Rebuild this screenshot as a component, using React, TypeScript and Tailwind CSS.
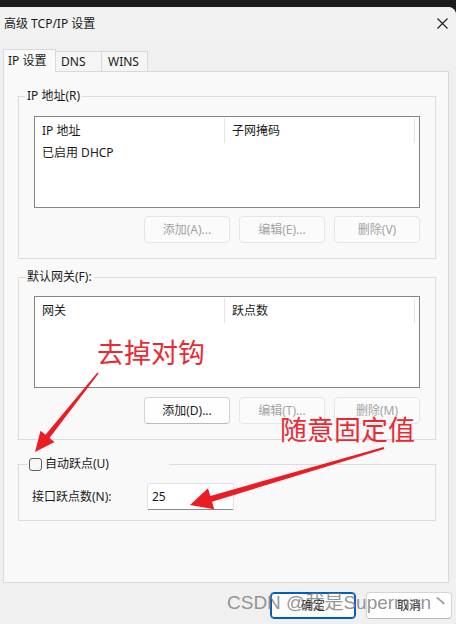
import React from "react";

const F = "font-['Noto_Sans','Noto_Sans_CJK_SC',sans-serif]";

function Btn({ label, disabled, primary }: { label: string; disabled?: boolean; primary?: boolean }) {
  const base = "w-[86px] h-[27px] rounded-[4px] border flex items-center justify-center text-[12px] leading-none";
  if (primary)
    return <div className={`${base} border-[#005fb8] bg-[#fdfdfd] text-[#1b1b1b] shadow-[inset_0_0_0_1px_#005fb8]`}>{label}</div>;
  if (disabled)
    return <div className={`${base} border-[#e6e6e6] bg-[#fbfbfb] text-[#a3a3a3]`}>{label}</div>;
  return <div className={`${base} border-[#d4d4d4] border-b-[#bababa] bg-[#fefefe] text-[#1b1b1b]`}>{label}</div>;
}

function ListBox({ c1, c2, rows }: { c1: string; c2: string; rows: string[] }) {
  return (
    <div className="h-[92px] border border-[#858585] bg-white flex flex-col">
      <div className="flex h-[26px] pt-[1px]">
        <div className="w-[190px] h-[25px] border-r border-[#e5e5e5] pl-[7px] flex items-center text-[12px] text-[#1b1b1b]">{c1}</div>
        <div className="w-[190px] h-[25px] border-r border-[#e5e5e5] pl-[7px] flex items-center text-[12px] text-[#1b1b1b]">{c2}</div>
      </div>
      {rows.map((r) => (
        <div key={r} className="h-[20px] pl-[7px] flex items-center text-[12px] text-[#1b1b1b]">{r}</div>
      ))}
    </div>
  );
}

export default function App() {
  return (
    <div className={`${F} relative w-[456px] h-[624px] overflow-hidden bg-[#1c1c1c]`}>
      <div className="h-[7px]" />
      <div className="h-[617px] bg-[#f0f0f0] rounded-tr-[8px] flex flex-col">
        {/* title bar */}
        <div className="h-[33px] flex items-center justify-between pl-[4px] pr-[8px] bg-[#f2f2f2] rounded-tr-[8px]">
          <span className="text-[12px] leading-none text-[#1b1b1b]">高级 TCP/IP 设置</span>
          <svg width="11" height="11" viewBox="0 0 11 11">
            <path d="M0.5 0.5 L10.5 10.5 M10.5 0.5 L0.5 10.5" stroke="#1b1b1b" strokeWidth="1.1" fill="none" />
          </svg>
        </div>
        {/* tabs */}
        <div className="mt-[9px] pl-[3px] flex items-end h-[23px] relative z-10 -mb-[1px]">
          <div className="w-[53px] h-[23px] border-t border-l border-r border-[#d9d9d9] bg-[#f9f9f9] pl-[4px] flex items-center text-[12px] text-[#1b1b1b]">IP 设置</div>
          <div className="w-[46px] h-[21px] border-t border-r border-b border-[#d9d9d9] bg-[#f5f5f5] pl-[5px] flex items-center text-[12px] text-[#1b1b1b]">DNS</div>
          <div className="w-[46px] h-[21px] border-t border-r border-b border-[#d9d9d9] bg-[#f5f5f5] pl-[6px] flex items-center text-[12px] text-[#1b1b1b]">WINS</div>
        </div>
        {/* panel */}
        <div className="mx-[3px] w-[446px] h-[512px] border border-[#d9d9d9] bg-[#f9f9f9] pt-[16px] pl-[14px] flex flex-col text-[12px] text-[#1b1b1b]">
          <fieldset className="w-[418px] border border-[#dcdcdc]">
            <legend className="ml-[6px] px-[2px] leading-[16px] text-[12px]">IP 地址(R)</legend>
            <div className="px-[15px] pt-[12px] pb-[15px]">
              <ListBox c1="IP 地址" c2="子网掩码" rows={["已启用 DHCP"]} />
              <div className="mt-[8px] flex justify-end gap-[9px]">
                <Btn label="添加(A)..." disabled />
                <Btn label="编辑(E)..." disabled />
                <Btn label="删除(V)" disabled />
              </div>
            </div>
          </fieldset>

          <fieldset className="mt-[10px] w-[418px] border border-[#dcdcdc]">
            <legend className="ml-[6px] px-[2px] leading-[16px] text-[12px]">默认网关(F):</legend>
            <div className="px-[15px] pt-[11px] pb-[15px]">
              <ListBox c1="网关" c2="跃点数" rows={[]} />
              <div className="mt-[9px] flex justify-end gap-[9px]">
                <Btn label="添加(D)..." />
                <Btn label="编辑(T)..." disabled />
                <Btn label="删除(M)" disabled />
              </div>
            </div>
          </fieldset>

          <fieldset className="mt-[16px] w-[418px] border border-[#dcdcdc]">
            <legend className="ml-[8px] pl-[2px] w-[142px] h-[16px] flex items-center gap-[3px] leading-[16px] text-[12px]">
              <span className="w-[13px] h-[13px] border border-[#5f5f5f] rounded-[3px] bg-[#f6f6f6] inline-block" />
              <span>自动跃点(U)</span>
            </legend>
            <div className="pl-[13px] pt-[11px] pb-[10px] flex items-center">
              <span className="w-[115px]">接口跃点数(N):</span>
              <div className="w-[87px] h-[27px] bg-white border border-[#e3e3e3] border-b-[#8a8a8a] rounded-[2px] pl-[4px] flex items-center text-[12px]">25</div>
            </div>
          </fieldset>
        </div>
        {/* bottom buttons */}
        <div className="mt-[9px] flex justify-end gap-[10px] pr-[4px]">
          <Btn label="确定" primary />
          <Btn label="取消" />
        </div>
      </div>

      {/* annotations */}
      <svg className="absolute left-0 top-0 pointer-events-none" width="456" height="624" viewBox="0 0 456 624">
        <polygon
          points="98.6,373.5 49.5,438 54.5,442 35,452 40.5,430.8 45.5,434.8 97.4,372.5"
          fill="#ec1c24"
        />
        <polygon
          points="384.3,449 212,501.7 214.2,509.3 190,505 208,488.3 210.3,495.9 383.7,447"
          fill="#ec1c24"
        />
      </svg>
      <div className="absolute left-[97px] top-[338px] text-[27px] leading-[27px] text-[#ea2a33] font-['Noto_Sans_CJK_SC',sans-serif] pointer-events-none">去掉对钩</div>
      <div className="absolute left-[280px] top-[415px] text-[27px] leading-[27px] text-[#ea2a33] font-['Noto_Sans_CJK_SC',sans-serif] pointer-events-none">随意固定值</div>
      <div className="absolute left-[227px] top-[593px] text-[19px] leading-[19px] whitespace-nowrap text-[#7a7a7a]/80 font-['Liberation_Sans','Noto_Sans_CJK_SC',sans-serif] pointer-events-none">CSDN @我是Superman丶</div>
    </div>
  );
}
